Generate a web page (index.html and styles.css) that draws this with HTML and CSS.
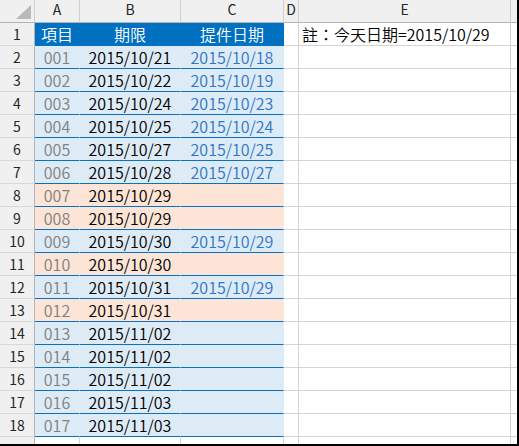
FILE: index.html
```html
<!DOCTYPE html>
<html lang="zh-Hant">
<head>
<meta charset="utf-8">
<title>Sheet</title>
<link rel="stylesheet" href="styles.css">
</head>
<body>
<div class="sheet">
  <div class="row colhdr">
    <div class="cell corner"><svg width="34" height="22" viewBox="0 0 34 22"><polygon points="31,5 31,19 16,19" fill="#b9b9b9"/></svg></div>
    <div class="cell ch">A</div>
    <div class="cell ch">B</div>
    <div class="cell ch">C</div>
    <div class="cell ch">D</div>
    <div class="cell ch">E</div>
    <div class="cell ch last"></div>
  </div>
  <div class="row">
    <div class="cell rh">1</div>
    <div class="cell t th">項目</div>
    <div class="cell t th">期限</div>
    <div class="cell t th">提件日期</div>
    <div class="cell"></div>
    <div class="cell note">註：今天日期=2015/10/29</div>
    <div class="cell last"></div>
  </div>
  <div class="row">
    <div class="cell rh">2</div>
    <div class="cell t b id">001</div>
    <div class="cell t b due">2015/10/21</div>
    <div class="cell t b sub">2015/10/18</div>
    <div class="cell"></div><div class="cell"></div><div class="cell last"></div>
  </div>
  <div class="row">
    <div class="cell rh">3</div>
    <div class="cell t b id">002</div>
    <div class="cell t b due">2015/10/22</div>
    <div class="cell t b sub">2015/10/19</div>
    <div class="cell"></div><div class="cell"></div><div class="cell last"></div>
  </div>
  <div class="row">
    <div class="cell rh">4</div>
    <div class="cell t b id">003</div>
    <div class="cell t b due">2015/10/24</div>
    <div class="cell t b sub">2015/10/23</div>
    <div class="cell"></div><div class="cell"></div><div class="cell last"></div>
  </div>
  <div class="row">
    <div class="cell rh">5</div>
    <div class="cell t b id">004</div>
    <div class="cell t b due">2015/10/25</div>
    <div class="cell t b sub">2015/10/24</div>
    <div class="cell"></div><div class="cell"></div><div class="cell last"></div>
  </div>
  <div class="row">
    <div class="cell rh">6</div>
    <div class="cell t b id">005</div>
    <div class="cell t b due">2015/10/27</div>
    <div class="cell t b sub">2015/10/25</div>
    <div class="cell"></div><div class="cell"></div><div class="cell last"></div>
  </div>
  <div class="row">
    <div class="cell rh">7</div>
    <div class="cell t b id">006</div>
    <div class="cell t b due">2015/10/28</div>
    <div class="cell t b sub">2015/10/27</div>
    <div class="cell"></div><div class="cell"></div><div class="cell last"></div>
  </div>
  <div class="row">
    <div class="cell rh">8</div>
    <div class="cell t p id">007</div>
    <div class="cell t p due">2015/10/29</div>
    <div class="cell t p sub"></div>
    <div class="cell"></div><div class="cell"></div><div class="cell last"></div>
  </div>
  <div class="row">
    <div class="cell rh">9</div>
    <div class="cell t p id">008</div>
    <div class="cell t p due">2015/10/29</div>
    <div class="cell t p sub"></div>
    <div class="cell"></div><div class="cell"></div><div class="cell last"></div>
  </div>
  <div class="row">
    <div class="cell rh">10</div>
    <div class="cell t b id">009</div>
    <div class="cell t b due">2015/10/30</div>
    <div class="cell t b sub">2015/10/29</div>
    <div class="cell"></div><div class="cell"></div><div class="cell last"></div>
  </div>
  <div class="row">
    <div class="cell rh">11</div>
    <div class="cell t p id">010</div>
    <div class="cell t p due">2015/10/30</div>
    <div class="cell t p sub"></div>
    <div class="cell"></div><div class="cell"></div><div class="cell last"></div>
  </div>
  <div class="row">
    <div class="cell rh">12</div>
    <div class="cell t b id">011</div>
    <div class="cell t b due">2015/10/31</div>
    <div class="cell t b sub">2015/10/29</div>
    <div class="cell"></div><div class="cell"></div><div class="cell last"></div>
  </div>
  <div class="row">
    <div class="cell rh">13</div>
    <div class="cell t p id">012</div>
    <div class="cell t p due">2015/10/31</div>
    <div class="cell t p sub"></div>
    <div class="cell"></div><div class="cell"></div><div class="cell last"></div>
  </div>
  <div class="row">
    <div class="cell rh">14</div>
    <div class="cell t b id">013</div>
    <div class="cell t b due">2015/11/02</div>
    <div class="cell t b sub"></div>
    <div class="cell"></div><div class="cell"></div><div class="cell last"></div>
  </div>
  <div class="row">
    <div class="cell rh">15</div>
    <div class="cell t b id">014</div>
    <div class="cell t b due">2015/11/02</div>
    <div class="cell t b sub"></div>
    <div class="cell"></div><div class="cell"></div><div class="cell last"></div>
  </div>
  <div class="row">
    <div class="cell rh">16</div>
    <div class="cell t b id">015</div>
    <div class="cell t b due">2015/11/02</div>
    <div class="cell t b sub"></div>
    <div class="cell"></div><div class="cell"></div><div class="cell last"></div>
  </div>
  <div class="row">
    <div class="cell rh">17</div>
    <div class="cell t b id">016</div>
    <div class="cell t b due">2015/11/03</div>
    <div class="cell t b sub"></div>
    <div class="cell"></div><div class="cell"></div><div class="cell last"></div>
  </div>
  <div class="row">
    <div class="cell rh">18</div>
    <div class="cell t b id">017</div>
    <div class="cell t b due">2015/11/03</div>
    <div class="cell t b sub"></div>
    <div class="cell"></div><div class="cell"></div><div class="cell last"></div>
  </div>
  <div class="row">
    <div class="cell rh"></div>
    <div class="cell"></div>
    <div class="cell"></div>
    <div class="cell"></div>
    <div class="cell"></div><div class="cell"></div><div class="cell last"></div>
  </div>
</div>
</body>
</html>
```

FILE: styles.css
```css
html, body {
  margin: 0;
  padding: 0;
  background: #ffffff;
  overflow: hidden;
}

.sheet {
  width: 517px;
  height: 444px;
  border-right: 2px solid #000;
  border-bottom: 2px solid #000;
  overflow: hidden;
  font-family: "Noto Sans CJK TC", "Noto Sans", sans-serif;
  font-size: 16px;
  font-weight: 350;
  color: #000;
}

.row {
  display: grid;
  grid-template-columns: 35px 45px 101px 103px 15px 212px 6px;
  height: 23px;
}

.cell {
  box-sizing: border-box;
  height: 23px;
  border-right: 1px solid #d4d4d4;
  border-bottom: 1px solid #d4d4d4;
  line-height: 22px;
  text-align: center;
  white-space: nowrap;
  overflow: visible;
}

.cell.last {
  border-right: none;
}

.colhdr .cell {
  background: #f0f0f0;
  border-right-color: #d0d0d0;
  border-bottom-color: #b4b4b4;
  font-size: 14px;
  font-weight: 400;
  line-height: 18px;
  color: #262626;
}

.colhdr .corner {
  border-right-color: #d0d0d0;
  line-height: 0;
}

.corner svg {
  display: block;
}

.rh {
  background: #f0f0f0;
  border-right-color: #b4b4b4 !important;
  border-bottom-color: #d8d8d8;
  font-size: 14px;
  font-weight: 400;
  color: #262626;
}

.t {
  border-right-color: transparent;
  border-bottom-color: #0a70c2;
}

.th {
  background: #0070c0;
  color: #ffffff;
}

.b {
  background: #ddebf7;
}

.p {
  background: #fce4d6;
}

.id {
  color: #808080;
}

.due {
  color: #000000;
}

.sub {
  color: #2e75c6;
}

.note {
  text-align: left;
  padding-left: 3px;
}
```
